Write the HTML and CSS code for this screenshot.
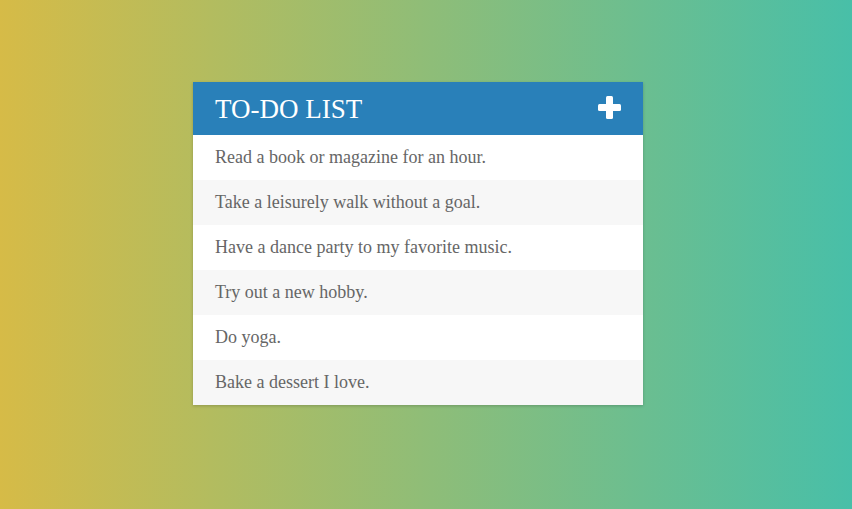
FILE: index.html
```html
<!DOCTYPE html>
<html>
<head>
<meta charset="utf-8">
<link rel="stylesheet" href="styles.css">
</head>
<body>
<div class="page">
  <div class="card">
    <div class="header">
      <h1 class="title">TO-DO LIST</h1>
      <svg class="plus" width="23" height="23" viewBox="0 0 23 23" aria-hidden="true">
        <rect x="8" y="0" width="7" height="23" rx="1.5" fill="#fff"/>
        <rect x="0" y="8" width="23" height="7" rx="1.5" fill="#fff"/>
      </svg>
    </div>
    <ul class="list">
      <li class="item">Read a book or magazine for an hour.</li>
      <li class="item">Take a leisurely walk without a goal.</li>
      <li class="item">Have a dance party to my favorite music.</li>
      <li class="item">Try out a new hobby.</li>
      <li class="item">Do yoga.</li>
      <li class="item">Bake a dessert I love.</li>
    </ul>
  </div>
</div>
</body>
</html>
```
FILE: styles.css
```css
html, body {
  margin: 0;
  padding: 0;
  height: 100%;
}
body {
  background: linear-gradient(to right, #d6bb47, #48bfa8);
  font-family: "Liberation Serif", "Times New Roman", serif;
}
.page {
  padding: 82px 0 0 193px;
}
.card {
  width: 450px;
  background: #fff;
  box-shadow: 0 1px 3px rgba(0, 0, 0, 0.2);
}
.header {
  height: 53px;
  background: #2980b9;
  display: flex;
  align-items: center;
  justify-content: space-between;
  padding: 0 22px 0 22px;
}
.title {
  margin: 0;
  color: #fff;
  font-weight: normal;
  font-size: 27px;
  line-height: 52px;
}
.plus {
  display: block;
  margin-top: -3px;
}
.list {
  list-style: none;
  margin: 0;
  padding: 0;
}
.item {
  height: 45px;
  line-height: 45px;
  padding: 0 22px;
  color: #666;
  font-size: 18px;
}
.item:nth-child(even) {
  background: #f7f7f7;
}
```
